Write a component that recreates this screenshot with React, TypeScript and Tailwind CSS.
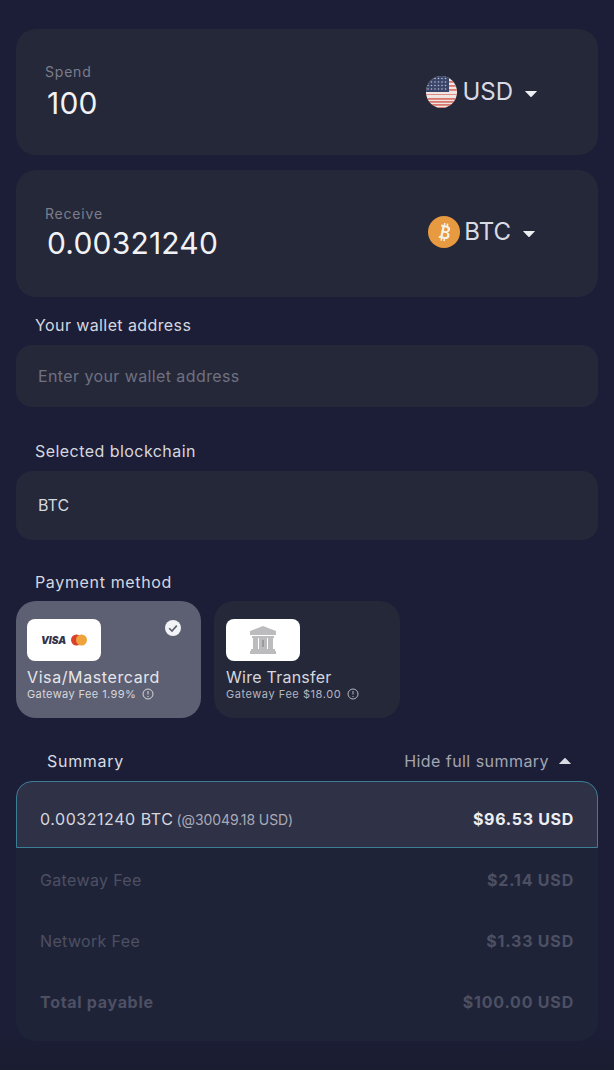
import { ReactNode } from "react";

const font = { fontFamily: '"Inter", "Roboto", sans-serif' };

function Caret({ up = false }: { up?: boolean }) {
  return (
    <svg width="14" height="8" viewBox="0 0 14 8" className={up ? "rotate-180" : ""}>
      <path d="M1.5 1 H12.5 Q13.2 1 12.7 1.6 L7.6 6.8 Q7 7.3 6.4 6.8 L1.3 1.6 Q.8 1 1.5 1 Z" fill="currentColor" />
    </svg>
  );
}

function UsFlag() {
  return (
    <svg width="31" height="32" viewBox="0 0 31 32">
      <defs>
        <clipPath id="flag-clip">
          <ellipse cx="15.5" cy="16" rx="15.5" ry="16" />
        </clipPath>
      </defs>
      <g clipPath="url(#flag-clip)">
        <rect width="31" height="32" fill="#efe6e4" />
        {[1, 5, 9, 13, 17, 22, 25, 28, 31].map((y) => (
          <rect key={y} y={y} width="31" height="1.8" fill="#d9776f" />
        ))}
        <rect width="23" height="16" fill="#39456a" />
        {[2.5, 6, 9.5, 13].map((y) =>
          [2, 5.5, 9, 12.5, 16, 19.5].map((x) => (
            <circle key={`${x}-${y}`} cx={x} cy={y} r="0.8" fill="#b9bece" />
          )),
        )}
        <rect y="16" width="31" height="2" fill="#efe6e4" />
      </g>
    </svg>
  );
}

function BtcLogo() {
  return (
    <svg width="32" height="32" viewBox="0 0 32 32">
      <circle cx="16" cy="16" r="16" fill="#e79a3f" />
      <g transform="rotate(12 16 16) translate(1.6 1.6) scale(0.9)">
        <path
          d="M11.5 8.5 h6 c3 0 4.6 1.6 4.6 3.7 c0 1.7-1 2.9-2.4 3.4 c1.9.4 3.2 1.8 3.2 3.8 c0 2.6-2 4.1-5 4.1 h-6.4 v-2.2 h1.5 v-10.6 h-1.5 z M15.6 10.8 v3.9 h1.7 c1.4 0 2.2-.8 2.2-2 s-.8-1.9-2.2-1.9 z M15.6 16.9 v4.3 h2.1 c1.6 0 2.5-.8 2.5-2.2 s-.9-2.1-2.5-2.1 z"
          fill="#f6f1e8"
          fillRule="evenodd"
        />
        <rect x="14" y="6" width="1.7" height="3" fill="#f6f1e8" />
        <rect x="17.2" y="6" width="1.7" height="3" fill="#f6f1e8" />
        <rect x="14" y="23" width="1.7" height="3" fill="#f6f1e8" />
        <rect x="17.2" y="23" width="1.7" height="3" fill="#f6f1e8" />
      </g>
    </svg>
  );
}

function BankIcon() {
  return (
    <svg width="32" height="28" viewBox="0 0 32 28" fill="#bcbcbf">
      <path d="M16 0 L29 5 V9 H3 V5 Z" />
      <rect x="5" y="10" width="22" height="2" />
      <rect x="6" y="12" width="5" height="11" />
      <rect x="12" y="12" width="8" height="11" />
      <rect x="21" y="12" width="5" height="11" />
      <rect x="15" y="14" width="2" height="7" fill="#9a9a9e" />
      <rect x="4" y="23" width="24" height="2" />
      <rect x="3" y="25" width="26" height="3" />
    </svg>
  );
}

function InfoIcon() {
  return (
    <svg width="12" height="12" viewBox="0 0 12 12" fill="none" stroke="currentColor" strokeWidth="1">
      <circle cx="6" cy="6" r="5" />
      <path d="M6 3 V6.5 M6 8 V9" />
    </svg>
  );
}

function AmountCard({
  label,
  value,
  unit,
  icon,
  className,
  selectClass,
  labelClass,
  columnClass,
  iconGap,
}: {
  label: string;
  value: string;
  unit: string;
  icon: ReactNode;
  className: string;
  selectClass: string;
  labelClass: string;
  columnClass: string;
  iconGap: string;
}) {
  return (
    <div className={`flex items-center justify-between rounded-[20px] bg-[#252839] pl-[29px] ${className}`}>
      <div className={`flex flex-col ${columnClass}`}>
        <span className={`text-[14px] leading-[20px] tracking-[0.8px] text-[#7b7d8b] ${labelClass}`}>{label}</span>
        <span className="pl-[2px] text-[30px] leading-[36px] tracking-[0.2px] text-[#f1f2f5]">{value}</span>
      </div>
      <div className={`flex items-center text-[#d9dbe4] ${selectClass}`}>
        <div className={`flex items-center ${iconGap}`}>
          {icon}
          <span className="text-[24px] leading-[30px]">{unit}</span>
        </div>
        <span className="pt-1 text-[#eceef2]">
          <Caret />
        </span>
      </div>
    </div>
  );
}

function FieldLabel({ children, className = "" }: { children: ReactNode; className?: string }) {
  return <div className={`pl-[19px] text-[16px] leading-[20px] text-[#d5d7df] ${className}`}>{children}</div>;
}

function SummaryRow({ label, value, bold = false }: { label: string; value: string; bold?: boolean }) {
  return (
    <div className="flex h-[61px] items-center justify-between text-[16px] text-[#4d5063]">
      <span className={bold ? "font-bold tracking-[0.7px]" : "tracking-[0.35px]"}>{label}</span>
      <span className="font-bold tracking-[0.8px]">{value}</span>
    </div>
  );
}

export default function App() {
  return (
    <div
      className="h-[1070px] w-[614px] overflow-hidden bg-linear-to-b from-[#1c1e38] from-[96%] to-[#1a1c30] px-4 pt-[29px]"
      style={font}
    >
      <AmountCard
        label="Spend"
        value="100"
        unit="USD"
        icon={<UsFlag />}
        className="h-[126px] pr-[60px]"
        selectClass="gap-[11px]"
        labelClass="-mt-[3px] mb-[3px]"
        columnClass="pt-[2px]"
        iconGap="gap-[5px]"
      />
      <div className="mt-[15px]">
        <AmountCard
          label="Receive"
          value="0.00321240"
          unit="BTC"
          icon={<BtcLogo />}
          className="h-[127px] pr-[62px]"
          selectClass="gap-[11px] pb-[3px]"
          labelClass="-mt-[2px] mb-[1px]"
          columnClass=""
          iconGap="gap-[4px]"
        />
      </div>

      <div className="mt-[18px]">
        <FieldLabel className="tracking-[0.4px]">Your wallet address</FieldLabel>
      </div>
      <div className="mt-[10px] flex h-[62px] items-center rounded-[16px] bg-[#252839] pl-[22px] text-[16px] tracking-[0.4px] text-[#6f7180]">
        Enter your wallet address
      </div>

      <div className="mt-[34px]">
        <FieldLabel className="tracking-[0.45px]">Selected blockchain</FieldLabel>
      </div>
      <div className="mt-[10px] flex h-[69px] items-center rounded-[16px] bg-[#252839] pb-[2px] pl-[22px] text-[16px] text-[#d5d7df]">
        BTC
      </div>

      <div className="mt-[32px]">
        <FieldLabel className="tracking-[0.65px]">Payment method</FieldLabel>
      </div>

      <div className="mt-[9px] flex gap-[13px]">
        <div className="relative h-[117px] w-[185px] rounded-[20px] bg-[#5d5f72] pl-[11px] pt-[18px]">
          <div className="flex h-[42px] w-[74px] items-center justify-center gap-[5px] rounded-[8px] bg-white">
            <span className="text-[10px] font-black italic text-[#33334a]">VISA</span>
            <svg width="16" height="12" viewBox="0 0 16 12">
              <circle cx="5.5" cy="6" r="5.5" fill="#d9422c" />
              <circle cx="10.5" cy="6" r="5.5" fill="#f0a33c" />
            </svg>
          </div>
          <div className="mt-[7px] text-[16px] leading-[18px] tracking-[0.6px] text-[#e5e6ea]">Visa/Mastercard</div>
          <div className="mt-[1px] flex items-center gap-[6px] text-[11px] leading-[14px] tracking-[0.4px] text-[#d6d7dd]">
            Gateway Fee 1.99% <InfoIcon />
          </div>
          <svg className="absolute right-[20px] top-[19px]" width="16" height="16" viewBox="0 0 16 16">
            <circle cx="8" cy="8" r="8" fill="#f2f3f5" />
            <path d="M4.2 8.2 L7 11 L11.8 5.6" fill="none" stroke="#5d5f72" strokeWidth="1.6" />
          </svg>
        </div>
        <div className="h-[117px] w-[186px] rounded-[20px] bg-[#252839] pl-[12px] pt-[18px]">
          <div className="flex h-[42px] w-[74px] items-center justify-center rounded-[8px] bg-white">
            <BankIcon />
          </div>
          <div className="mt-[7px] text-[16px] leading-[18px] tracking-[0.25px] text-[#d5d7df]">Wire Transfer</div>
          <div className="mt-[1px] flex items-center gap-[6px] text-[11px] leading-[14px] tracking-[0.55px] text-[#b3b5c0]">
            Gateway Fee $18.00 <InfoIcon />
          </div>
        </div>
      </div>

      <div className="mt-[33px] flex h-[20px] items-center justify-between pl-[31px] pr-[26px] text-[16px]">
        <span className="tracking-[0.7px] text-[#d9dbe2]">Summary</span>
        <span className="flex items-center gap-[9px] tracking-[0.45px] text-[#a3a5b0]">
          Hide full summary
          <span className="text-[#d9dbe2]">
            <Caret up />
          </span>
        </span>
      </div>

      <div className="mt-[10px] flex h-[67px] items-center justify-between rounded-t-[16px] border border-[#3b7f96] bg-[#2f3147] px-[23px] pt-[8px] text-[16px] text-[#d5d7df]">
        <span className="tracking-[0.55px]">
          0.00321240 BTC <span className="-ml-[2px] text-[14px] tracking-[-0.1px] text-[#a8aab6]">(@30049.18 USD)</span>
        </span>
        <span className="font-bold tracking-[0.7px] text-[#eceef2]">$96.53 USD</span>
      </div>
      <div className="rounded-b-[20px] bg-[#1f2338] px-6 pb-[9px] pt-[1px]">
        <SummaryRow label="Gateway Fee" value="$2.14 USD" />
        <SummaryRow label="Network Fee" value="$1.33 USD" />
        <SummaryRow label="Total payable" value="$100.00 USD" bold />
      </div>
    </div>
  );
}
